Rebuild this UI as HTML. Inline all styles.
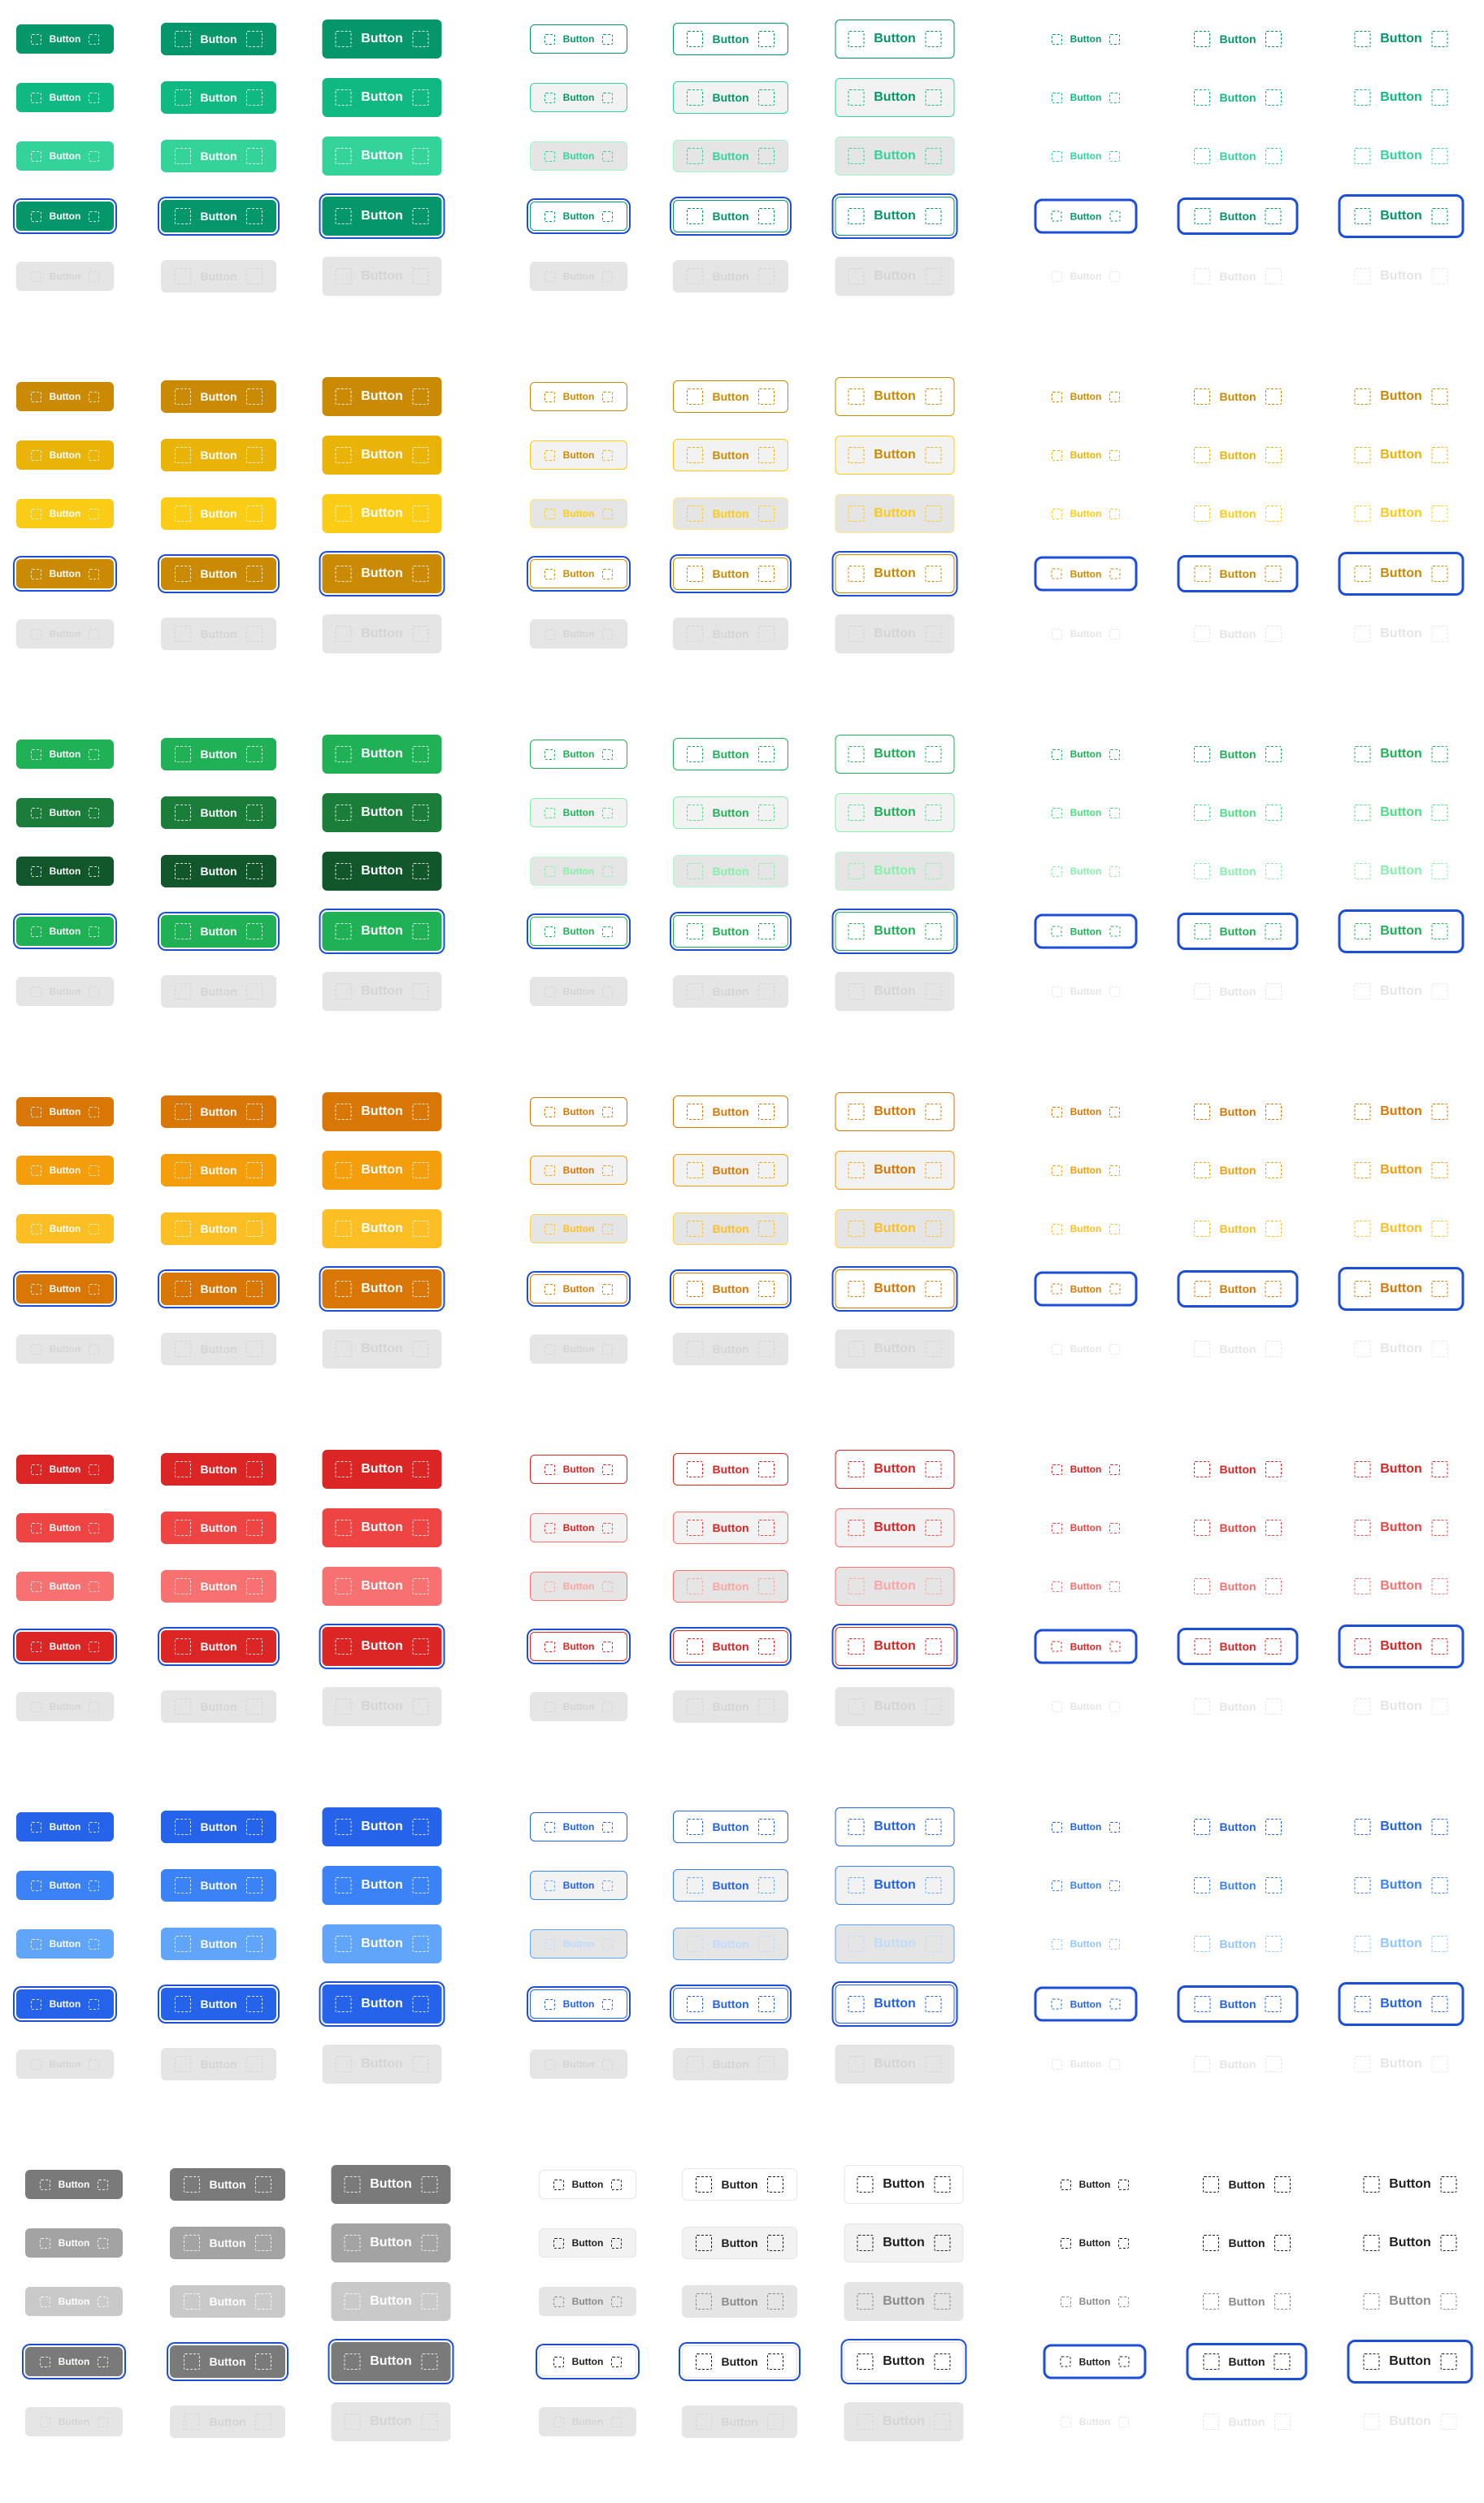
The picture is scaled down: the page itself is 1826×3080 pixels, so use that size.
<!DOCTYPE html>
<html><head><meta charset="utf-8">
<style>
html,body{margin:0;padding:0;background:#fff;width:1826px;height:3029px;overflow:hidden}
.sec{position:absolute;left:0;width:1826px;height:440px}
.b{position:absolute;margin:0;display:flex;align-items:center;justify-content:center;box-sizing:border-box;border-radius:6px;font-family:"Liberation Sans",Arial,sans-serif;font-weight:700;transform:translate(-50%,-50%);white-space:nowrap;border:1.5px solid transparent}
.b i{display:block;box-sizing:border-box;border:1.5px dashed currentColor;border-radius:2px;flex:none}
.c1,.c4,.c7{width:120px;height:36px;gap:10px;font-size:12px}
.c1 i,.c4 i,.c7 i{width:13px;height:13px;border-width:1px}
.c2,.c5,.c8{width:142px;height:40px;gap:11px;font-size:14px}
.c2 i,.c5 i,.c8 i{width:20px;height:20px}
.c3,.c6,.c9{width:147px;height:48px;gap:12px;font-size:16px}
.c3 i,.c6 i,.c9 i{width:20px;height:20px}
.c1{left:80px}.c2{left:269px}.c3{left:470px}
.c4{left:712px}.c5{left:899px}.c6{left:1101px}
.c7{left:1336px}.c8{left:1523px}.c9{left:1724px}
.r1{top:48px}.r2{top:120px}.r3{top:192px}.r4{top:266px}.r5{top:340px}
.c1,.c2,.c3{color:#fff}
.c1 i,.c2 i,.c3 i{color:rgba(255,255,255,.85)}
.c1.r1,.c2.r1,.c3.r1,.c1.r4,.c2.r4,.c3.r4{background:var(--a);border-color:var(--a)}
.c1.r2,.c2.r2,.c3.r2{background:var(--b);border-color:var(--b)}
.c1.r3,.c2.r3,.c3.r3{background:var(--c);border-color:var(--c)}
.r4.c1,.r4.c2,.r4.c3,.r4.c4,.r4.c5,.r4.c6{box-shadow:0 0 0 2px #fff,0 0 0 4px #1d4ed8}
.r5.c1,.r5.c2,.r5.c3,.r5.c4,.r5.c5,.r5.c6{background:#e5e5e5;border-color:#e5e5e5;color:#d4d4d4}
.r5.c1 i,.r5.c2 i,.r5.c3 i{color:#d4d4d4}
.c4.r1,.c5.r1,.c6.r1,.c4.r4,.c5.r4,.c6.r4{background:#fff;border-color:var(--oa);color:var(--ot)}
.c4.r2,.c5.r2,.c6.r2{background:#f2f2f2;border-color:var(--ob);color:var(--ot)}
.c4.r2 i,.c5.r2 i,.c6.r2 i{color:var(--oi)}
.c4.r3,.c5.r3,.c6.r3{background:#e5e5e5;border-color:var(--oc);color:var(--ot3)}
.c7.r1,.c8.r1,.c9.r1,.c7.r4,.c8.r4,.c9.r4{color:var(--ta)}
.c7.r2,.c8.r2,.c9.r2{color:var(--tb)}
.c7.r3,.c8.r3,.c9.r3{color:var(--tc)}
.c7.r5,.c8.r5,.c9.r5{color:#e5e5e5}
.c7.r4{width:127px;height:43px;border:3px solid #1d4ed8;border-radius:10px}
.c8.r4{width:149px;height:46px;border:3px solid #1d4ed8;border-radius:10px}
.c9.r4{width:155px;height:54px;border:3px solid #1d4ed8;border-radius:10px}
</style></head><body>

<div class="sec" style="top:0;--a:#059669;--b:#10b981;--c:#34d399;--oa:#059669;--ob:#34d399;--oc:#a7f3d0;--ot:#059669;--oi:#10b981;--ot3:#34d399;--ta:#059669;--tb:#10b981;--tc:#34d399">
<p class="b c1 r1"><i></i>Button<i></i></p><p class="b c2 r1"><i></i>Button<i></i></p><p class="b c3 r1"><i></i>Button<i></i></p><p class="b c4 r1"><i></i>Button<i></i></p><p class="b c5 r1"><i></i>Button<i></i></p><p class="b c6 r1"><i></i>Button<i></i></p><p class="b c7 r1"><i></i>Button<i></i></p><p class="b c8 r1"><i></i>Button<i></i></p><p class="b c9 r1"><i></i>Button<i></i></p>
<p class="b c1 r2"><i></i>Button<i></i></p><p class="b c2 r2"><i></i>Button<i></i></p><p class="b c3 r2"><i></i>Button<i></i></p><p class="b c4 r2"><i></i>Button<i></i></p><p class="b c5 r2"><i></i>Button<i></i></p><p class="b c6 r2"><i></i>Button<i></i></p><p class="b c7 r2"><i></i>Button<i></i></p><p class="b c8 r2"><i></i>Button<i></i></p><p class="b c9 r2"><i></i>Button<i></i></p>
<p class="b c1 r3"><i></i>Button<i></i></p><p class="b c2 r3"><i></i>Button<i></i></p><p class="b c3 r3"><i></i>Button<i></i></p><p class="b c4 r3"><i></i>Button<i></i></p><p class="b c5 r3"><i></i>Button<i></i></p><p class="b c6 r3"><i></i>Button<i></i></p><p class="b c7 r3"><i></i>Button<i></i></p><p class="b c8 r3"><i></i>Button<i></i></p><p class="b c9 r3"><i></i>Button<i></i></p>
<p class="b c1 r4"><i></i>Button<i></i></p><p class="b c2 r4"><i></i>Button<i></i></p><p class="b c3 r4"><i></i>Button<i></i></p><p class="b c4 r4"><i></i>Button<i></i></p><p class="b c5 r4"><i></i>Button<i></i></p><p class="b c6 r4"><i></i>Button<i></i></p><p class="b c7 r4"><i></i>Button<i></i></p><p class="b c8 r4"><i></i>Button<i></i></p><p class="b c9 r4"><i></i>Button<i></i></p>
<p class="b c1 r5"><i></i>Button<i></i></p><p class="b c2 r5"><i></i>Button<i></i></p><p class="b c3 r5"><i></i>Button<i></i></p><p class="b c4 r5"><i></i>Button<i></i></p><p class="b c5 r5"><i></i>Button<i></i></p><p class="b c6 r5"><i></i>Button<i></i></p><p class="b c7 r5"><i></i>Button<i></i></p><p class="b c8 r5"><i></i>Button<i></i></p><p class="b c9 r5"><i></i>Button<i></i></p>
</div>

<div class="sec" style="top:440px;--a:#ca8a04;--b:#eab308;--c:#facc15;--oa:#ca8a04;--ob:#facc15;--oc:#fde68a;--ot:#ca8a04;--oi:#eab308;--ot3:#facc15;--ta:#ca8a04;--tb:#eab308;--tc:#facc15">
<p class="b c1 r1"><i></i>Button<i></i></p><p class="b c2 r1"><i></i>Button<i></i></p><p class="b c3 r1"><i></i>Button<i></i></p><p class="b c4 r1"><i></i>Button<i></i></p><p class="b c5 r1"><i></i>Button<i></i></p><p class="b c6 r1"><i></i>Button<i></i></p><p class="b c7 r1"><i></i>Button<i></i></p><p class="b c8 r1"><i></i>Button<i></i></p><p class="b c9 r1"><i></i>Button<i></i></p>
<p class="b c1 r2"><i></i>Button<i></i></p><p class="b c2 r2"><i></i>Button<i></i></p><p class="b c3 r2"><i></i>Button<i></i></p><p class="b c4 r2"><i></i>Button<i></i></p><p class="b c5 r2"><i></i>Button<i></i></p><p class="b c6 r2"><i></i>Button<i></i></p><p class="b c7 r2"><i></i>Button<i></i></p><p class="b c8 r2"><i></i>Button<i></i></p><p class="b c9 r2"><i></i>Button<i></i></p>
<p class="b c1 r3"><i></i>Button<i></i></p><p class="b c2 r3"><i></i>Button<i></i></p><p class="b c3 r3"><i></i>Button<i></i></p><p class="b c4 r3"><i></i>Button<i></i></p><p class="b c5 r3"><i></i>Button<i></i></p><p class="b c6 r3"><i></i>Button<i></i></p><p class="b c7 r3"><i></i>Button<i></i></p><p class="b c8 r3"><i></i>Button<i></i></p><p class="b c9 r3"><i></i>Button<i></i></p>
<p class="b c1 r4"><i></i>Button<i></i></p><p class="b c2 r4"><i></i>Button<i></i></p><p class="b c3 r4"><i></i>Button<i></i></p><p class="b c4 r4"><i></i>Button<i></i></p><p class="b c5 r4"><i></i>Button<i></i></p><p class="b c6 r4"><i></i>Button<i></i></p><p class="b c7 r4"><i></i>Button<i></i></p><p class="b c8 r4"><i></i>Button<i></i></p><p class="b c9 r4"><i></i>Button<i></i></p>
<p class="b c1 r5"><i></i>Button<i></i></p><p class="b c2 r5"><i></i>Button<i></i></p><p class="b c3 r5"><i></i>Button<i></i></p><p class="b c4 r5"><i></i>Button<i></i></p><p class="b c5 r5"><i></i>Button<i></i></p><p class="b c6 r5"><i></i>Button<i></i></p><p class="b c7 r5"><i></i>Button<i></i></p><p class="b c8 r5"><i></i>Button<i></i></p><p class="b c9 r5"><i></i>Button<i></i></p>
</div>

<div class="sec" style="top:880px;--a:#20b157;--b:#1a7d3a;--c:#12572b;--oa:#20b157;--ob:#86efac;--oc:#bbf7d0;--ot:#20b157;--oi:#4ade80;--ot3:#86efac;--ta:#20b157;--tb:#4ade80;--tc:#86efac">
<p class="b c1 r1"><i></i>Button<i></i></p><p class="b c2 r1"><i></i>Button<i></i></p><p class="b c3 r1"><i></i>Button<i></i></p><p class="b c4 r1"><i></i>Button<i></i></p><p class="b c5 r1"><i></i>Button<i></i></p><p class="b c6 r1"><i></i>Button<i></i></p><p class="b c7 r1"><i></i>Button<i></i></p><p class="b c8 r1"><i></i>Button<i></i></p><p class="b c9 r1"><i></i>Button<i></i></p>
<p class="b c1 r2"><i></i>Button<i></i></p><p class="b c2 r2"><i></i>Button<i></i></p><p class="b c3 r2"><i></i>Button<i></i></p><p class="b c4 r2"><i></i>Button<i></i></p><p class="b c5 r2"><i></i>Button<i></i></p><p class="b c6 r2"><i></i>Button<i></i></p><p class="b c7 r2"><i></i>Button<i></i></p><p class="b c8 r2"><i></i>Button<i></i></p><p class="b c9 r2"><i></i>Button<i></i></p>
<p class="b c1 r3"><i></i>Button<i></i></p><p class="b c2 r3"><i></i>Button<i></i></p><p class="b c3 r3"><i></i>Button<i></i></p><p class="b c4 r3"><i></i>Button<i></i></p><p class="b c5 r3"><i></i>Button<i></i></p><p class="b c6 r3"><i></i>Button<i></i></p><p class="b c7 r3"><i></i>Button<i></i></p><p class="b c8 r3"><i></i>Button<i></i></p><p class="b c9 r3"><i></i>Button<i></i></p>
<p class="b c1 r4"><i></i>Button<i></i></p><p class="b c2 r4"><i></i>Button<i></i></p><p class="b c3 r4"><i></i>Button<i></i></p><p class="b c4 r4"><i></i>Button<i></i></p><p class="b c5 r4"><i></i>Button<i></i></p><p class="b c6 r4"><i></i>Button<i></i></p><p class="b c7 r4"><i></i>Button<i></i></p><p class="b c8 r4"><i></i>Button<i></i></p><p class="b c9 r4"><i></i>Button<i></i></p>
<p class="b c1 r5"><i></i>Button<i></i></p><p class="b c2 r5"><i></i>Button<i></i></p><p class="b c3 r5"><i></i>Button<i></i></p><p class="b c4 r5"><i></i>Button<i></i></p><p class="b c5 r5"><i></i>Button<i></i></p><p class="b c6 r5"><i></i>Button<i></i></p><p class="b c7 r5"><i></i>Button<i></i></p><p class="b c8 r5"><i></i>Button<i></i></p><p class="b c9 r5"><i></i>Button<i></i></p>
</div>

<div class="sec" style="top:1320px;--a:#d97706;--b:#f59e0b;--c:#fbbf24;--oa:#d97706;--ob:#f59e0b;--oc:#fcd34d;--ot:#d97706;--oi:#f59e0b;--ot3:#fbbf24;--ta:#d97706;--tb:#f59e0b;--tc:#fbbf24">
<p class="b c1 r1"><i></i>Button<i></i></p><p class="b c2 r1"><i></i>Button<i></i></p><p class="b c3 r1"><i></i>Button<i></i></p><p class="b c4 r1"><i></i>Button<i></i></p><p class="b c5 r1"><i></i>Button<i></i></p><p class="b c6 r1"><i></i>Button<i></i></p><p class="b c7 r1"><i></i>Button<i></i></p><p class="b c8 r1"><i></i>Button<i></i></p><p class="b c9 r1"><i></i>Button<i></i></p>
<p class="b c1 r2"><i></i>Button<i></i></p><p class="b c2 r2"><i></i>Button<i></i></p><p class="b c3 r2"><i></i>Button<i></i></p><p class="b c4 r2"><i></i>Button<i></i></p><p class="b c5 r2"><i></i>Button<i></i></p><p class="b c6 r2"><i></i>Button<i></i></p><p class="b c7 r2"><i></i>Button<i></i></p><p class="b c8 r2"><i></i>Button<i></i></p><p class="b c9 r2"><i></i>Button<i></i></p>
<p class="b c1 r3"><i></i>Button<i></i></p><p class="b c2 r3"><i></i>Button<i></i></p><p class="b c3 r3"><i></i>Button<i></i></p><p class="b c4 r3"><i></i>Button<i></i></p><p class="b c5 r3"><i></i>Button<i></i></p><p class="b c6 r3"><i></i>Button<i></i></p><p class="b c7 r3"><i></i>Button<i></i></p><p class="b c8 r3"><i></i>Button<i></i></p><p class="b c9 r3"><i></i>Button<i></i></p>
<p class="b c1 r4"><i></i>Button<i></i></p><p class="b c2 r4"><i></i>Button<i></i></p><p class="b c3 r4"><i></i>Button<i></i></p><p class="b c4 r4"><i></i>Button<i></i></p><p class="b c5 r4"><i></i>Button<i></i></p><p class="b c6 r4"><i></i>Button<i></i></p><p class="b c7 r4"><i></i>Button<i></i></p><p class="b c8 r4"><i></i>Button<i></i></p><p class="b c9 r4"><i></i>Button<i></i></p>
<p class="b c1 r5"><i></i>Button<i></i></p><p class="b c2 r5"><i></i>Button<i></i></p><p class="b c3 r5"><i></i>Button<i></i></p><p class="b c4 r5"><i></i>Button<i></i></p><p class="b c5 r5"><i></i>Button<i></i></p><p class="b c6 r5"><i></i>Button<i></i></p><p class="b c7 r5"><i></i>Button<i></i></p><p class="b c8 r5"><i></i>Button<i></i></p><p class="b c9 r5"><i></i>Button<i></i></p>
</div>

<div class="sec" style="top:1760px;--a:#dc2626;--b:#ef4444;--c:#f87171;--oa:#dc2626;--ob:#f87171;--oc:#f87171;--ot:#dc2626;--oi:#ef4444;--ot3:#fca5a5;--ta:#dc2626;--tb:#ef4444;--tc:#f87171">
<p class="b c1 r1"><i></i>Button<i></i></p><p class="b c2 r1"><i></i>Button<i></i></p><p class="b c3 r1"><i></i>Button<i></i></p><p class="b c4 r1"><i></i>Button<i></i></p><p class="b c5 r1"><i></i>Button<i></i></p><p class="b c6 r1"><i></i>Button<i></i></p><p class="b c7 r1"><i></i>Button<i></i></p><p class="b c8 r1"><i></i>Button<i></i></p><p class="b c9 r1"><i></i>Button<i></i></p>
<p class="b c1 r2"><i></i>Button<i></i></p><p class="b c2 r2"><i></i>Button<i></i></p><p class="b c3 r2"><i></i>Button<i></i></p><p class="b c4 r2"><i></i>Button<i></i></p><p class="b c5 r2"><i></i>Button<i></i></p><p class="b c6 r2"><i></i>Button<i></i></p><p class="b c7 r2"><i></i>Button<i></i></p><p class="b c8 r2"><i></i>Button<i></i></p><p class="b c9 r2"><i></i>Button<i></i></p>
<p class="b c1 r3"><i></i>Button<i></i></p><p class="b c2 r3"><i></i>Button<i></i></p><p class="b c3 r3"><i></i>Button<i></i></p><p class="b c4 r3"><i></i>Button<i></i></p><p class="b c5 r3"><i></i>Button<i></i></p><p class="b c6 r3"><i></i>Button<i></i></p><p class="b c7 r3"><i></i>Button<i></i></p><p class="b c8 r3"><i></i>Button<i></i></p><p class="b c9 r3"><i></i>Button<i></i></p>
<p class="b c1 r4"><i></i>Button<i></i></p><p class="b c2 r4"><i></i>Button<i></i></p><p class="b c3 r4"><i></i>Button<i></i></p><p class="b c4 r4"><i></i>Button<i></i></p><p class="b c5 r4"><i></i>Button<i></i></p><p class="b c6 r4"><i></i>Button<i></i></p><p class="b c7 r4"><i></i>Button<i></i></p><p class="b c8 r4"><i></i>Button<i></i></p><p class="b c9 r4"><i></i>Button<i></i></p>
<p class="b c1 r5"><i></i>Button<i></i></p><p class="b c2 r5"><i></i>Button<i></i></p><p class="b c3 r5"><i></i>Button<i></i></p><p class="b c4 r5"><i></i>Button<i></i></p><p class="b c5 r5"><i></i>Button<i></i></p><p class="b c6 r5"><i></i>Button<i></i></p><p class="b c7 r5"><i></i>Button<i></i></p><p class="b c8 r5"><i></i>Button<i></i></p><p class="b c9 r5"><i></i>Button<i></i></p>
</div>

<div class="sec" style="top:2200px;--a:#2563eb;--b:#3b82f6;--c:#60a5fa;--oa:#2563eb;--ob:#3b82f6;--oc:#60a5fa;--ot:#2563eb;--oi:#60a5fa;--ot3:#bfdbfe;--ta:#2563eb;--tb:#3b82f6;--tc:#93c5fd">
<p class="b c1 r1"><i></i>Button<i></i></p><p class="b c2 r1"><i></i>Button<i></i></p><p class="b c3 r1"><i></i>Button<i></i></p><p class="b c4 r1"><i></i>Button<i></i></p><p class="b c5 r1"><i></i>Button<i></i></p><p class="b c6 r1"><i></i>Button<i></i></p><p class="b c7 r1"><i></i>Button<i></i></p><p class="b c8 r1"><i></i>Button<i></i></p><p class="b c9 r1"><i></i>Button<i></i></p>
<p class="b c1 r2"><i></i>Button<i></i></p><p class="b c2 r2"><i></i>Button<i></i></p><p class="b c3 r2"><i></i>Button<i></i></p><p class="b c4 r2"><i></i>Button<i></i></p><p class="b c5 r2"><i></i>Button<i></i></p><p class="b c6 r2"><i></i>Button<i></i></p><p class="b c7 r2"><i></i>Button<i></i></p><p class="b c8 r2"><i></i>Button<i></i></p><p class="b c9 r2"><i></i>Button<i></i></p>
<p class="b c1 r3"><i></i>Button<i></i></p><p class="b c2 r3"><i></i>Button<i></i></p><p class="b c3 r3"><i></i>Button<i></i></p><p class="b c4 r3"><i></i>Button<i></i></p><p class="b c5 r3"><i></i>Button<i></i></p><p class="b c6 r3"><i></i>Button<i></i></p><p class="b c7 r3"><i></i>Button<i></i></p><p class="b c8 r3"><i></i>Button<i></i></p><p class="b c9 r3"><i></i>Button<i></i></p>
<p class="b c1 r4"><i></i>Button<i></i></p><p class="b c2 r4"><i></i>Button<i></i></p><p class="b c3 r4"><i></i>Button<i></i></p><p class="b c4 r4"><i></i>Button<i></i></p><p class="b c5 r4"><i></i>Button<i></i></p><p class="b c6 r4"><i></i>Button<i></i></p><p class="b c7 r4"><i></i>Button<i></i></p><p class="b c8 r4"><i></i>Button<i></i></p><p class="b c9 r4"><i></i>Button<i></i></p>
<p class="b c1 r5"><i></i>Button<i></i></p><p class="b c2 r5"><i></i>Button<i></i></p><p class="b c3 r5"><i></i>Button<i></i></p><p class="b c4 r5"><i></i>Button<i></i></p><p class="b c5 r5"><i></i>Button<i></i></p><p class="b c6 r5"><i></i>Button<i></i></p><p class="b c7 r5"><i></i>Button<i></i></p><p class="b c8 r5"><i></i>Button<i></i></p><p class="b c9 r5"><i></i>Button<i></i></p>
</div>

<div class="sec" style="top:2640px;left:11px;--a:#7a7a7a;--b:#a3a3a3;--c:#c9c9c9;--oa:#e5e5e5;--ob:#e5e5e5;--oc:#e5e5e5;--ot:#1f1f1f;--oi:#1f1f1f;--ot3:#8a8a8a;--ta:#1f1f1f;--tb:#1f1f1f;--tc:#8a8a8a">
<p class="b c1 r1"><i></i>Button<i></i></p><p class="b c2 r1"><i></i>Button<i></i></p><p class="b c3 r1"><i></i>Button<i></i></p><p class="b c4 r1"><i></i>Button<i></i></p><p class="b c5 r1"><i></i>Button<i></i></p><p class="b c6 r1"><i></i>Button<i></i></p><p class="b c7 r1"><i></i>Button<i></i></p><p class="b c8 r1"><i></i>Button<i></i></p><p class="b c9 r1"><i></i>Button<i></i></p>
<p class="b c1 r2"><i></i>Button<i></i></p><p class="b c2 r2"><i></i>Button<i></i></p><p class="b c3 r2"><i></i>Button<i></i></p><p class="b c4 r2"><i></i>Button<i></i></p><p class="b c5 r2"><i></i>Button<i></i></p><p class="b c6 r2"><i></i>Button<i></i></p><p class="b c7 r2"><i></i>Button<i></i></p><p class="b c8 r2"><i></i>Button<i></i></p><p class="b c9 r2"><i></i>Button<i></i></p>
<p class="b c1 r3"><i></i>Button<i></i></p><p class="b c2 r3"><i></i>Button<i></i></p><p class="b c3 r3"><i></i>Button<i></i></p><p class="b c4 r3"><i></i>Button<i></i></p><p class="b c5 r3"><i></i>Button<i></i></p><p class="b c6 r3"><i></i>Button<i></i></p><p class="b c7 r3"><i></i>Button<i></i></p><p class="b c8 r3"><i></i>Button<i></i></p><p class="b c9 r3"><i></i>Button<i></i></p>
<p class="b c1 r4"><i></i>Button<i></i></p><p class="b c2 r4"><i></i>Button<i></i></p><p class="b c3 r4"><i></i>Button<i></i></p><p class="b c4 r4"><i></i>Button<i></i></p><p class="b c5 r4"><i></i>Button<i></i></p><p class="b c6 r4"><i></i>Button<i></i></p><p class="b c7 r4"><i></i>Button<i></i></p><p class="b c8 r4"><i></i>Button<i></i></p><p class="b c9 r4"><i></i>Button<i></i></p>
<p class="b c1 r5"><i></i>Button<i></i></p><p class="b c2 r5"><i></i>Button<i></i></p><p class="b c3 r5"><i></i>Button<i></i></p><p class="b c4 r5"><i></i>Button<i></i></p><p class="b c5 r5"><i></i>Button<i></i></p><p class="b c6 r5"><i></i>Button<i></i></p><p class="b c7 r5"><i></i>Button<i></i></p><p class="b c8 r5"><i></i>Button<i></i></p><p class="b c9 r5"><i></i>Button<i></i></p>
</div>

</body></html>
